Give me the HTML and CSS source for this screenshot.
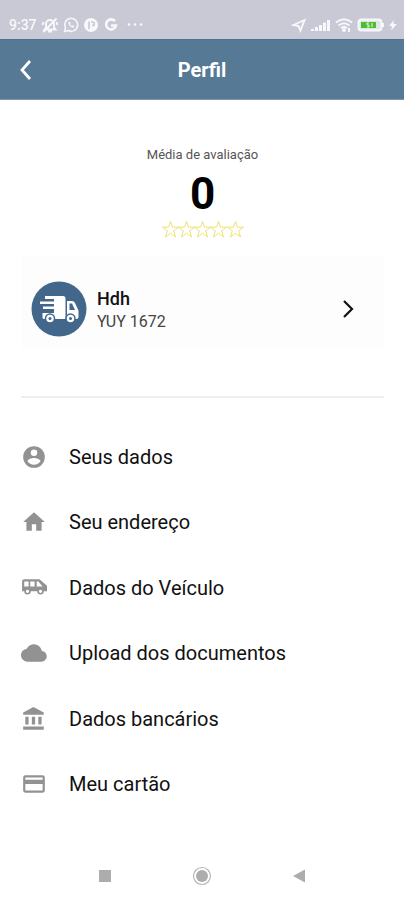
FILE: index.html
```html
<!DOCTYPE html>
<html lang="pt-BR">
<head>
<meta charset="utf-8">
<meta name="viewport" content="width=device-width, initial-scale=1">
<title>Perfil</title>
<link rel="stylesheet" href="styles.css">
</head>
<body>
<div class="status">
  <div class="status-group">
    <span class="clock">9:37</span>
    <svg width="18" height="18" viewBox="0 0 18 18" fill="none" stroke="currentColor" stroke-width="2"><path d="M3.500 13.500h11l-1.500-2V8a4 4 0 0 0-8 0v3.500zM7 15.500h4M2.500 16 15.500 2.500M1.500 9l1-3M16.500 9l-1-3"/></svg>
    <svg width="16" height="16" viewBox="0 0 16 16" fill="none" stroke="currentColor" stroke-width="1.500"><path d="M1.500 14.500l1-3.500A6.500 6.500 0 1 1 5 13.500z"/><path d="M5.500 5c-.5 3 2.500 6 5.500 5.500l.3-1.500-1.800-.8-.8.8L7 7.300l.7-.9L7 4.700z" fill="currentColor" stroke="none"/></svg>
    <svg width="16" height="16" viewBox="0 0 16 16"><circle cx="8" cy="8" r="7" fill="currentColor"/><path d="M6 12V4.500M8 5h1.500a1.800 1.800 0 0 1 0 3.600H9" fill="none" stroke="#c8c9d4" stroke-width="1.600"/></svg>
    <svg width="16" height="16" viewBox="0 0 16 16" fill="none" stroke="currentColor" stroke-width="2.600"><path d="M12 4.200A5 5 0 1 0 13 8.500H8"/></svg>
    <svg class="dots" width="16" height="16" viewBox="0 0 16 16" fill="currentColor"><circle cx="2" cy="7.500" r="1.300"/><circle cx="8" cy="7.500" r="1.300"/><circle cx="14" cy="7.500" r="1.300"/></svg>
  </div>
  <div class="status-group">
    <svg width="16" height="16" viewBox="0 0 16 16" fill="none" stroke="currentColor" stroke-width="1.900"><path d="M2.500 8 13.500 3 9.500 13.500 7.500 9z"/></svg>
    <svg width="20" height="16" viewBox="0 0 20 16" fill="currentColor"><path d="M0 12h3v2H0zM4 10h3v4H4zM8 8h3v6H8zM12 5.500h3V14h-3zM16 3h3v11h-3z"/></svg>
    <svg width="18" height="16" viewBox="0 0 18 16" fill="none" stroke="currentColor" stroke-width="2.100"><path d="M1 5.500q8-6.500 16 0M3.500 8.500q5.500-4.500 11 0M6 11q3-2.500 6 0"/><circle cx="9" cy="13" r="1" fill="currentColor"/><path d="M14 11v4" stroke-width="2"/></svg>
    <svg width="28" height="16" viewBox="0 0 28 16"><rect x="1.500" y="2.500" width="23" height="11" rx="3" fill="#e3e6e8" stroke="#f7f8fb" stroke-width="2"/><rect x="4" y="5" width="15" height="6" fill="#4cc02c"/><path d="M12 6h-2v2h2v2h-2M15 6v4" fill="none" stroke="#e8f5e5"/><path d="M26 6v4" stroke="#f7f8fb" stroke-width="2"/></svg>
    <svg width="8" height="16" viewBox="0 0 8 16" fill="currentColor"><path d="M5 3 0 9h3l-1 4.500L8 7H4.500z"/></svg>
  </div>
</div>
<header class="bar">
  <button class="back" aria-label="Voltar"><svg width="16" height="22" viewBox="0 0 16 22" fill="none" stroke="currentColor" stroke-width="2.800"><path d="M13 2 5 11l8 9"/></svg></button>
  <h1>Perfil</h1>
</header>
<main>
  <section class="rating">
    <p>Média de avaliação</p>
    <strong>0</strong>
    <svg width="84" height="20" viewBox="0 0 84 20" fill="none" stroke="#eee36a" stroke-width="1"><defs><path id="star" d="M9.500 1.500l2 5.700h6l-4.800 3.600 1.800 6.200-5-3.700-5 3.700 1.800-6.200L1.500 7.200h6z"/></defs><use href="#star"/><use href="#star" x="16"/><use href="#star" x="32"/><use href="#star" x="48"/><use href="#star" x="65"/></svg>
  </section>
  <a class="card" href="#veiculo">
    <svg width="56" height="56" viewBox="0 0 56 56"><circle cx="28" cy="28" r="27.500" fill="#42678a"/><path d="M14 15h18q2.500 0 2.500 2.500V38H13q-1.500 0-1.500-1.500V32H23v-4H12v-2.500h11V23H9v-2.500h14V18h-9zM36 20h5q2 0 3 2l3 6.500q.5 1 .5 2V36q0 2-2 2H36z" fill="#fff"/><path d="M38.500 22.500h2.500l3 6.500h-5.500z" fill="#42678a"/><g fill="#fff" stroke="#42678a" stroke-width="1.500"><circle cx="19" cy="37.500" r="4.500"/><circle cx="39.500" cy="37.500" r="4.500"/></g><g fill="#42678a"><circle cx="19" cy="37.500" r="1.500"/><circle cx="39.500" cy="37.500" r="1.500"/></g></svg>
    <span class="who"><b>Hdh</b><span>YUY 1672</span></span>
    <svg width="14" height="20" viewBox="0 0 14 20" fill="none" stroke="#111" stroke-width="2.200"><path d="M3 2l8 8-8 8"/></svg>
  </a>
  <hr>
  <nav class="menu" aria-label="Perfil">
    <a href="#dados"><svg viewBox="0 0 24 24"><path d="M12 2a10 10 0 1 0 0 20 10 10 0 0 0 0-20zm0 3a3 3 0 1 1 0 6 3 3 0 0 1 0-6zm0 14.200a7.200 7.200 0 0 1-6-3.220c.03-1.990 4-3.080 6-3.080s5.970 1.090 6 3.080a7.200 7.200 0 0 1-6 3.220z"/></svg>Seus dados</a>
    <a href="#endereco"><svg viewBox="0 0 24 24"><path d="M10 20v-6h4v6h5v-8h3L12 3 2 12h3v8z"/></svg>Seu endereço</a>
    <a href="#veiculo"><svg viewBox="0 0 24 24"><path d="M17 4H3a2 2 0 0 0-2 2v9h2a3 3 0 0 0 6 0h6a3 3 0 0 0 6 0h3v-5zM3 10.500V6h4v4.500zm3 6a1.500 1.500 0 1 1 0-3 1.500 1.500 0 0 1 0 3zM12.500 10.500H8.500V6h4zm5.500 6a1.500 1.500 0 1 1 0-3 1.500 1.500 0 0 1 0 3zM14.500 10.500V6H16l4 4.500z"/></svg>Dados do Veículo</a>
    <a href="#documentos"><svg viewBox="0 0 24 24"><path d="M19.350 10.040A7.490 7.490 0 0 0 12 4C9.110 4 6.600 5.640 5.350 8.040A5.994 5.994 0 0 0 0 14a6 6 0 0 0 6 6h13a5 5 0 0 0 .35-9.960z"/></svg>Upload dos documentos</a>
    <a href="#banco"><svg viewBox="0 0 24 24"><path d="M4 10v7h3v-7zm6 0v7h3v-7zM2 22h19v-3H2zm14-12v7h3v-7zM11.500 1 2 6v2h19V6z"/></svg>Dados bancários</a>
    <a href="#cartao"><svg viewBox="0 0 24 24"><path d="M20 4H4a2 2 0 0 0-2 2v12a2 2 0 0 0 2 2h16a2 2 0 0 0 2-2V6a2 2 0 0 0-2-2zm0 14H4v-6h16zm0-10H4V6h16z"/></svg>Meu cartão</a>
  </nav>
</main>
<footer class="keys">
  <button aria-label="Recentes"><svg width="20" height="20" viewBox="0 0 20 20"><path d="M4 4h12v12H4z" fill="#adadad"/></svg></button>
  <button aria-label="Início"><svg width="20" height="20" viewBox="0 0 20 20"><circle cx="10" cy="10" r="8.500" fill="none" stroke="#b5b5b5" stroke-width="1.200"/><circle cx="10" cy="10" r="6" fill="#adadad"/></svg></button>
  <button aria-label="Voltar"><svg width="20" height="20" viewBox="0 0 20 20"><path d="M4 10l12-6.500v13z" fill="#adadad"/></svg></button>
</footer>
</body>
</html>
```
FILE: styles.css
```css
* {
  box-sizing: border-box;
}

body {
  margin: 0;
  min-height: 100vh;
  display: flex;
  flex-direction: column;
  background: #fff;
  color: #111;
  font-family: Roboto, "Liberation Sans", sans-serif;
}

svg {
  display: block;
  flex: none;
}

button {
  padding: 0;
  border: 0;
  background: none;
  color: inherit;
}

a {
  color: inherit;
  text-decoration: none;
}

.status {
  display: flex;
  justify-content: space-between;
  padding: 10px 7px 0 9px;
  height: 39px;
  background: #c8c9d4;
  color: #f7f8fb;
}

.status-group {
  display: flex;
  align-items: center;
  gap: 4px;
}

.clock {
  font-size: 14px;
  font-weight: 500;
}

.dots {
  margin-left: 4px;
}

.bar {
  display: grid;
  grid-template-columns: 52px 1fr 52px;
  align-items: center;
  height: 61px;
  border-top: 1px solid #4c7391;
  border-bottom: 1px solid #7d95ac;
  background: #567995;
  color: #fff;
}

.back {
  padding-left: 17px;
}

.bar h1 {
  margin: 0;
  text-align: center;
  font-size: 20px;
  font-weight: 700;
}

main {
  flex: 1;
  display: flex;
  flex-direction: column;
  padding: 0 20px 0 21px;
}

.rating {
  display: flex;
  flex-direction: column;
  align-items: center;
  padding-top: 46px;
}

.rating p {
  margin: 0;
  color: #555;
  font-size: 13px;
  line-height: 18px;
}

.rating strong {
  padding-top: 4px;
  font-size: 44px;
  line-height: 52px;
  color: #000;
}

.card {
  display: flex;
  align-items: center;
  gap: 10px;
  height: 93px;
  margin-top: 16px;
  padding: 12px 29px 0 10px;
  background: #fdfdfd;
}

.who {
  flex: 1;
  display: flex;
  flex-direction: column;
  padding-top: 2px;
  font-size: 16px;
  line-height: 23px;
  color: #444;
}

.who b {
  font-size: 18px;
  font-weight: 500;
  color: #111;
}

hr {
  width: 100%;
  margin: 47px 0 26px;
  border: 0;
  border-top: 2px solid #eee;
}

.menu {
  flex: 1;
  display: grid;
  grid-auto-rows: 1fr;
}

.menu a {
  display: flex;
  align-items: center;
  gap: 22px;
  font-size: 20px;
}

.menu svg {
  width: 26px;
  height: 26px;
  fill: #929292;
}

.keys {
  display: flex;
  justify-content: center;
  gap: 77px;
  padding: 49px 0 14px;
}
```
